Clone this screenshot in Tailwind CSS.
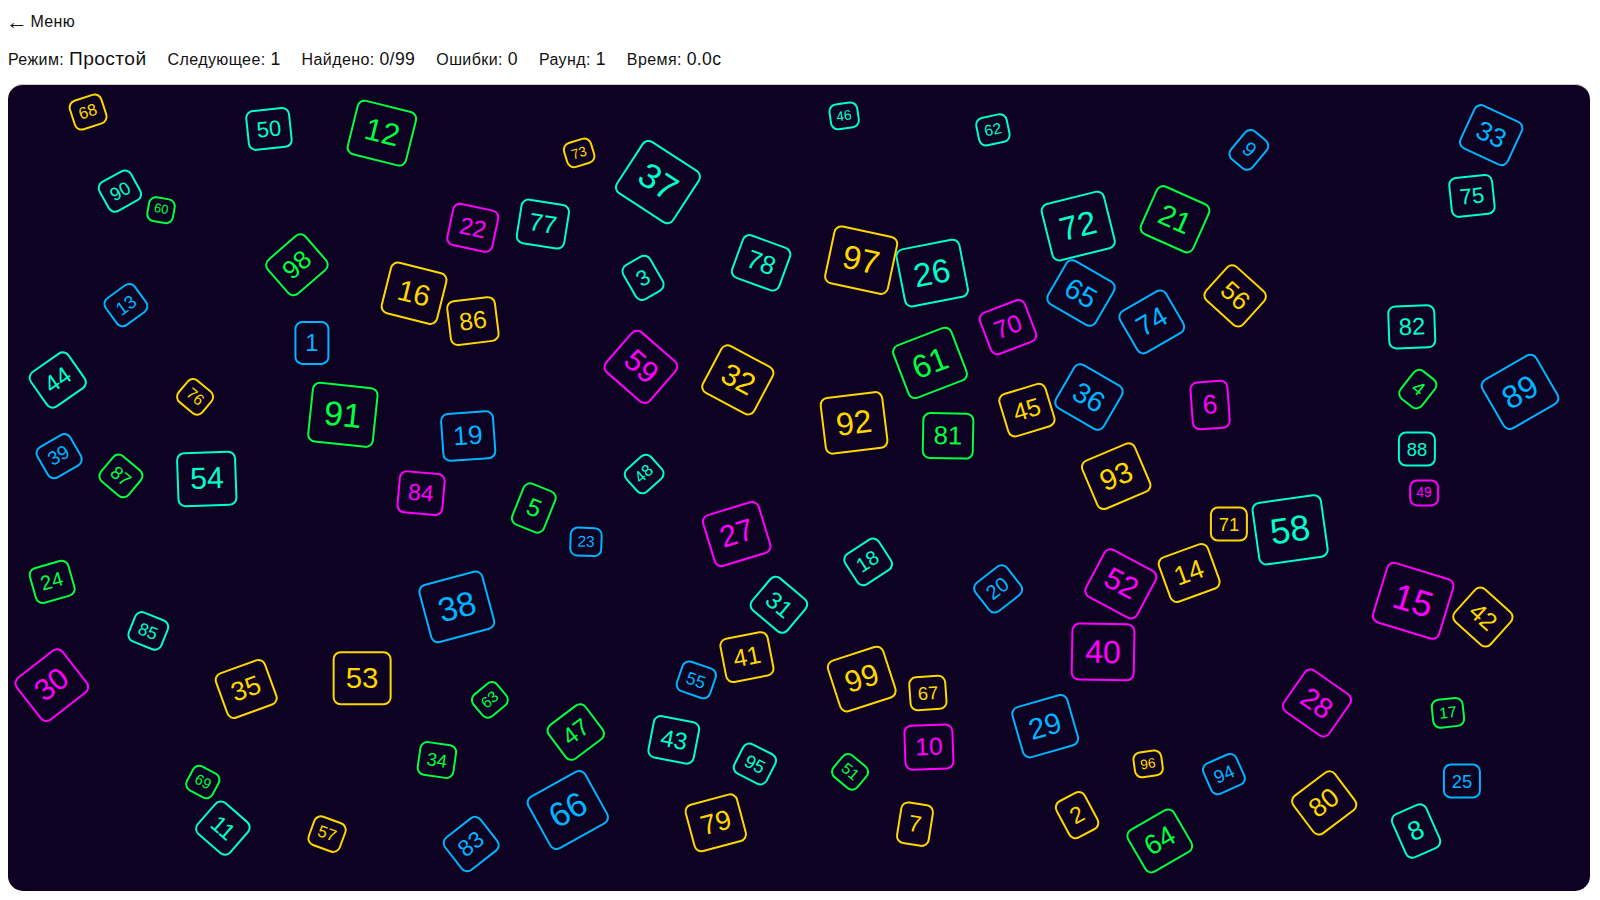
<!DOCTYPE html>
<html lang="ru">
<head>
    <meta charset="utf-8">
    <title>Таблица Шульте</title>
    <script src="https://cdn.jsdelivr.net/npm/@tailwindcss/browser@4"></script>
</head>
<body class="h-screen overflow-hidden bg-white px-2 pt-[9px] font-['Liberation_Sans',Arial,sans-serif] text-[#111]">
    <!-- Header -->
    <a href="#" class="-ml-[2px] flex h-[26px] items-center gap-[2px] tracking-[.4px] text-base"><span class="text-[22px] leading-none">←</span><span>Меню</span></a>
    <div class="mt-[11px] flex h-[26px] items-center gap-[21px] tracking-[.4px] text-base">
        <span>Режим: <span class="text-[19.2px]">Простой</span></span>
        <span>Следующее: <span class="text-[17.6px]">1</span></span>
        <span>Найдено: <span class="text-[17.6px]">0/99</span></span>
        <span>Ошибки: <span class="text-[17.6px]">0</span></span>
        <span>Раунд: <span class="text-[17.6px]">1</span></span>
        <span>Время: <span class="text-[17.6px]">0.0c</span></span>
    </div>

    <!-- Board -->
    <div id="board" class="relative mt-3 h-[807px] w-[1582px] overflow-hidden rounded-[15px] border-t border-[#ccc] bg-[#0d0221]"></div>

    <script>
// number, x, y, tile size, rotation, colour
const tiles = [
    [1,304,258,26,0,'b'],[2,1069,730,25,-28,'y'],[3,635,193,24,-30,'c'],[4,1410,304,21,38,'g'],
    [5,526,423,27,22,'g'],[6,1202,320,29,-4,'m'],[7,907,739,25,9,'y'],[8,1408,746,29,-24,'c'],
    [9,1241,65,22,40,'b'],[10,921,662,27,-2,'m'],[11,215,743,25,41,'c'],[12,374,48,34,14,'g'],
    [13,118,220,20,-36,'b'],[14,1181,488,29,-20,'y'],[15,1405,516,39,17,'m'],[16,406,208,32,14,'y'],
    [17,1440,628,17,-6,'g'],[18,860,477,22,-33,'c'],[19,460,351,29,-4,'b'],[20,990,504,22,-38,'b'],
    [21,1167,134,32,24,'g'],[22,465,143,26,12,'m'],[23,578,457,17,2,'b'],[24,44,497,22,-16,'g'],
    [25,1454,696,20,0,'b'],[26,924,188,36,-11,'c'],[27,729,449,33,-17,'m'],[28,1309,618,31,35,'m'],
    [29,1037,641,32,-16,'b'],[30,44,600,33,-38,'m'],[31,771,520,26,40,'c'],[32,730,295,33,28,'y'],
    [33,1483,50,29,25,'b'],[34,429,675,20,8,'g'],[35,238,604,29,-20,'y'],[36,1081,312,31,30,'b'],
    [37,650,97,38,33,'c'],[38,449,522,37,-15,'b'],[39,51,371,21,-30,'b'],[40,1095,567,35,1,'m'],
    [41,739,572,27,-11,'y'],[42,1475,532,27,42,'y'],[43,666,655,26,11,'c'],[44,50,295,26,-35,'c'],
    [45,1019,325,27,-17,'y'],[46,836,31,15,-8,'c'],[47,568,647,26,-37,'g'],[48,636,389,18,-42,'c'],
    [49,1416,408,15,0,'m'],[50,261,44,24,-6,'c'],[51,842,687,17,40,'g'],[52,1113,499,33,28,'m'],
    [53,354,593,32,0,'y'],[54,199,394,33,-2,'c'],[55,688,595,19,19,'b'],[56,1227,211,28,42,'y'],
    [57,319,749,18,20,'y'],[58,1282,445,39,-8,'c'],[59,633,282,33,41,'m'],[60,153,125,14,10,'g'],
    [61,922,278,35,-21,'g'],[62,985,45,17,-12,'c'],[63,482,615,17,-40,'g'],[64,1152,756,30,-30,'g'],
    [65,1073,208,31,30,'b'],[66,560,725,37,-29,'b'],[67,920,608,20,-4,'y'],[68,80,27,18,-18,'y'],
    [69,195,697,16,28,'g'],[70,1000,242,27,-21,'m'],[71,1221,439,20,0,'y'],[72,1070,141,36,-14,'c'],
    [73,571,68,15,-17,'y'],[74,1144,237,30,-30,'b'],[75,1464,111,24,-6,'c'],[76,187,312,17,40,'y'],
    [77,535,139,27,9,'c'],[78,753,178,28,20,'c'],[79,708,738,30,-15,'y'],[80,1316,718,29,-37,'y'],
    [81,940,351,28,1,'g'],[82,1404,242,26,-2,'c'],[83,463,759,25,-38,'b'],[84,413,408,25,5,'m'],
    [85,140,546,19,22,'c'],[86,465,236,27,-7,'y'],[87,113,391,20,40,'g'],[88,1409,364,20,0,'c'],
    [89,1512,307,35,-30,'b'],[90,112,106,20,-29,'c'],[91,335,330,37,6,'g'],[92,846,338,35,-7,'y'],
    [93,1108,391,32,-23,'y'],[94,1216,689,20,-24,'b'],[95,747,679,20,27,'c'],[96,1140,679,15,-8,'y'],
    [97,853,175,36,12,'y'],[98,289,180,28,-41,'g'],[99,854,594,33,-18,'y']
];

const colours = {
    y: 'border-[#ffd700] text-[#ffd700]',
    c: 'border-[#00ffcc] text-[#00ffcc]',
    g: 'border-[#00ff41] text-[#00ff41]',
    b: 'border-[#00b4ff] text-[#00b4ff]',
    m: 'border-[#ff00ff] text-[#ff00ff]'
};

const board = document.getElementById('board');
tiles.forEach(([n, x, y, size, rot, colour]) => {
    const tile = document.createElement('div');
    tile.className = 'absolute rounded-lg border-2 leading-[1.15] ' + colours[colour];
    tile.style.cssText = `left:${x}px;top:${y}px;font-size:${size * .92}px;padding:.267em .374em;transform:translate(-50%,-50%) rotate(${rot}deg)`;
    tile.textContent = n;
    board.appendChild(tile);
});
    </script>
</body>
</html>
